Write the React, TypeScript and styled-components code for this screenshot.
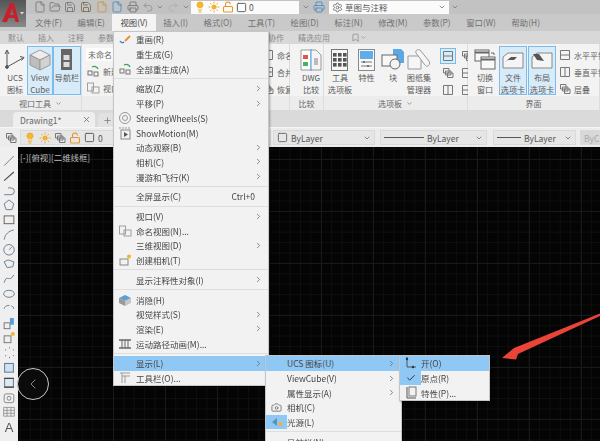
import type { ReactNode } from "react";
import styled, { createGlobalStyle } from "styled-components";
import {
  Bookmark, Camera, Check, ChevronDown, ChevronLeft, ChevronRight, File, FolderOpen, Lightbulb, LockOpen,
  Plus, Printer, Redo2, Save, Settings, Square, Sun, Undo2, X,
} from "lucide-react";

const GlobalStyle = createGlobalStyle`
  html, body { margin: 0; padding: 0; background: #000; overflow: hidden; }
  * { box-sizing: border-box; }
  svg { flex-shrink: 0; }
`;

const Screen = styled.div`
  position: relative;
  width: 600px;
  height: 441px;
  overflow: hidden;
  display: flex;
  flex-direction: column;
  font-family: "Noto Sans CJK SC", "Liberation Sans", sans-serif;
  font-size: 8.5px;
  color: #4a4a4a;
  filter: blur(0.35px);
`;

/* ---- title rows ---- */
const Header = styled.div`
  display: flex;
  height: 31px;
  background: #c9c9c9;
`;
const Logo = styled.div`
  width: 26px;
  height: 27px;
  background: linear-gradient(#555, #777 70%, #8a8a8a);
  flex: none;
`;
const HeaderRows = styled.div`
  flex: 1;
  display: flex;
  flex-direction: column;
`;
const QuickBar = styled.div`
  height: 14px;
  display: flex;
  align-items: center;
  background: #c2c2c2;
  padding-left: 7px;
`;
const QuickIcon = styled.span<{ $w?: number }>`
  width: ${(p) => p.$w ?? 16}px;
  display: flex;
  justify-content: center;
  color: #666;
`;
const WhiteField = styled.div<{ $w: number; $ml?: number }>`
  width: ${(p) => p.$w}px;
  margin-left: ${(p) => p.$ml ?? 0}px;
  height: 13px;
  background: #fbfbfb;
  display: flex;
  align-items: center;
  gap: 2px;
  padding: 0 3px;
  color: #555;
`;
const Grow = styled.span`
  flex: 1;
`;
const MenuBar = styled.div`
  height: 17px;
  display: flex;
  align-items: center;
  gap: 15.5px;
  padding-left: 9px;
  color: #707070;
  font-size: 8.4px;
`;
const MenuTitle = styled.span<{ $active?: boolean }>`
  height: 17px;
  line-height: 17px;
  white-space: nowrap;
  ${(p) => p.$active && `
    background: #f4f4f4;
    color: #444;
    padding: 0 8px;
    margin: 0 -8px;
  `}
`;

const TabsRow = styled.div`
  height: 13px;
  background: #d8d8d8;
  display: flex;
  align-items: center;
  padding-left: 8px;
  gap: 14px;
  color: #8a8a8a;
  font-size: 8px;
  white-space: nowrap;
`;
const RibbonTab = styled.span<{ $ml?: number }>`
  margin-left: ${(p) => p.$ml ?? 0}px;
  display: flex;
  align-items: center;
`;

/* ---- ribbon ---- */
const Ribbon = styled.div`
  height: 66px;
  display: flex;
  background: #e4e4e4;
`;
const Panel = styled.div<{ $w: number }>`
  width: ${(p) => p.$w}px;
  flex: none;
  display: flex;
  flex-direction: column;
  border-right: 1px solid #dcdcdc;
`;
const PanelBody = styled.div<{ $pl?: number; $gap?: number }>`
  height: 52px;
  padding: 2px 0 0 ${(p) => p.$pl ?? 0}px;
  background: #f3f3f3;
  display: flex;
  gap: ${(p) => p.$gap ?? 0}px;
`;
const PanelFoot = styled.div`
  flex: 1;
  background: #ececec;
  display: flex;
  align-items: center;
  justify-content: center;
  gap: 4px;
  color: #666;
  font-size: 8px;
`;
const BigTool = styled.div<{ $w: number; $active?: boolean }>`
  width: ${(p) => p.$w}px;
  height: 49px;
  flex: none;
  display: flex;
  flex-direction: column;
  align-items: center;
  padding-top: 3px;
  line-height: 12px;
  font-size: 8.1px;
  color: #5a5a5a;
  text-align: center;
  white-space: pre;
  ${(p) => p.$active && `
    background: #d8ebf9;
    outline: 1px solid #7cbcec;
    outline-offset: -1px;
  `}
  & > svg {
    height: 22px;
    margin-bottom: 1px;
    flex: none;
  }
`;
const SmallCol = styled.div<{ $w?: number; $ml?: number }>`
  width: ${(p) => (p.$w ? `${p.$w}px` : "auto")};
  margin-left: ${(p) => p.$ml ?? 0}px;
  flex: none;
  display: flex;
  flex-direction: column;
  gap: 3px;
  padding-top: 2px;
`;
const SmallRow = styled.div`
  height: 14px;
  display: flex;
  align-items: center;
  gap: 3px;
  white-space: nowrap;
  color: #5f5f5f;
  font-size: 8px;
`;
const ViewCombo = styled.div`
  height: 13px;
  width: 32px;
  background: #fcfcfc;
  display: flex;
  align-items: center;
  gap: 2px;
  padding-left: 2px;
  color: #666;
  font-size: 8px;
  overflow: hidden;
  white-space: nowrap;
`;
const IconGrid = styled.div`
  margin: 2px 0 0 7px;
  display: grid;
  grid-template-columns: 18px 18px;
  grid-auto-rows: 16px;
  gap: 1px;
  justify-items: center;
  align-items: center;
`;
const ActiveCell = styled.span`
  display: flex;
  padding: 1px;
  background: #d8ebf9;
  outline: 1px solid #7cbcec;
`;

/* ---- document tabs ---- */
const DocBar = styled.div`
  height: 18px;
  background: #dadada;
  display: flex;
  align-items: flex-end;
  padding-left: 13px;
  gap: 3px;
  border-bottom: 1px solid #f6f6f6;
`;
const DocTab = styled.div`
  width: 82px;
  height: 15px;
  background: #eeeeee;
  border-radius: 4px 4px 0 0;
  display: flex;
  align-items: center;
  justify-content: space-between;
  padding: 0 4px 0 7px;
  color: #666;
  font-size: 8.5px;
`;
const NewTab = styled.div`
  width: 18px;
  height: 14px;
  background: #e2e2e2;
  border-radius: 4px 4px 0 0;
  display: flex;
  align-items: center;
  justify-content: center;
  color: #777;
`;

/* ---- property toolbar ---- */
const PropBar = styled.div`
  height: 19px;
  background: #ececec;
  display: flex;
  align-items: center;
  padding-left: 5px;
`;
const Combo = styled.div<{ $w: number; $ml?: number; $off?: boolean }>`
  width: ${(p) => p.$w}px;
  margin-left: ${(p) => p.$ml ?? 0}px;
  height: 15px;
  flex: none;
  background: ${(p) => (p.$off ? "#d8d8d8" : "#e6e6e6")};
  border: 1px solid #dadada;
  display: flex;
  align-items: center;
  gap: 3px;
  padding: 0 3px;
  color: ${(p) => (p.$off ? "#aaa" : "#555")};
  font-size: 8.5px;
  white-space: nowrap;
  overflow: hidden;
`;
const LineSample = styled.span<{ $w: number }>`
  width: ${(p) => p.$w}px;
  height: 1px;
  background: #555;
  flex: none;
`;

/* ---- drawing area ---- */
const Workspace = styled.div`
  flex: 1;
  display: flex;
  min-height: 0;
`;
const ToolStrip = styled.div`
  width: 18px;
  flex: none;
  background: #efefef;
  display: flex;
  flex-direction: column;
  align-items: center;
  padding-top: 7px;
  gap: 1.2px;
`;
const StripIcon = styled.svg`
  width: 14px;
  height: 13.6px;
  flex: none;
  fill: none;
  stroke: #6b8196;
  stroke-width: 1;
`;
const StripLetter = styled.span`
  font-family: "Liberation Sans", sans-serif;
  font-size: 13px;
  line-height: 15px;
  color: #555;
`;
const Canvas = styled.div`
  flex: 1;
  position: relative;
  padding: 4px 0 0 2px;
  color: #bdbdbd;
  font-size: 8.4px;
  background-color: #040404;
  background-image:
    linear-gradient(90deg, #17191b 1px, transparent 1px),
    linear-gradient(#17191b 1px, transparent 1px),
    linear-gradient(90deg, #0d0e0f 1px, transparent 1px),
    linear-gradient(#0d0e0f 1px, transparent 1px);
  background-size: 52px 52px, 52px 52px, 10.4px 10.4px, 10.4px 10.4px;
  background-position: 43px 12px, 43px 12px, 43px 12px, 43px 12px;
`;
const BackButton = styled.div`
  position: absolute;
  left: -1px;
  top: 221px;
  width: 32px;
  height: 32px;
  border-radius: 50%;
  border: 1px solid #c8c8c8;
  background: #0b0b0b;
  display: flex;
  align-items: center;
  justify-content: center;
  color: #c8c8c8;
`;

/* ---- menus ---- */
const MenuPanel = styled.div<{ $left: number; $top: number; $w: number }>`
  position: absolute;
  left: ${(p) => p.$left}px;
  top: ${(p) => p.$top}px;
  width: ${(p) => p.$w}px;
  background: #f2f2f2;
  border: 1px solid #c6c6c6;
  box-shadow: 1px 1px 2px rgba(0, 0, 0, 0.3);
  color: #454545;
  font-size: 8.5px;
`;
const MenuRow = styled.div<{ $active?: boolean; $icon: number }>`
  height: 14.7px;
  display: flex;
  align-items: center;
  white-space: nowrap;
  background: ${(p) => (p.$active ? "#8fc7f5" : "transparent")};
  & > span:first-child {
    width: ${(p) => p.$icon}px;
  }
`;
const MenuIcon = styled.span<{ $on?: boolean }>`
  height: 100%;
  flex: none;
  display: flex;
  align-items: center;
  justify-content: center;
  background: ${(p) => (p.$on ? "#8fc7f5" : "transparent")};
`;
const MenuLabel = styled.span`
  flex: 1;
`;
const MenuKey = styled.span`
  margin-right: 13px;
  font-size: 8.5px;
`;
const MenuArrow = styled.span`
  width: 14px;
  flex: none;
  display: flex;
  color: #666;
`;
const MenuSep = styled.div`
  height: 5.05px;
  display: flex;
  align-items: center;
  &::after {
    content: "";
    flex: 1;
    height: 1px;
    background: #dedede;
  }
`;
const ArrowMark = styled.svg`
  position: absolute;
  left: 0;
  top: 0;
  width: 600px;
  height: 441px;
  pointer-events: none;
`;

/* ---- drawn icons ---- */
const Svg = ({ s = 14, w, children }: { s?: number; w?: number; children: ReactNode }) => (
  <svg width={w ?? s} height={s} viewBox={`0 0 ${w ?? s} ${s}`} fill="none" stroke="#777" strokeWidth="1">
    {children}
  </svg>
);

const LogoMark = () => (
  <svg width="26" height="27" viewBox="0 0 26 27">
    <path d="M2 22 L10 3 H14 L19 22 H15.5 L14.4 18 H8.6 L6.8 22 Z M9.8 15 H13.7 L12.1 8 Z" fill="#c8202a" fillRule="evenodd" />
    <path d="M20 12 h4 l-2 2.5 z" fill="#ddd" />
  </svg>
);
const UcsBig = () => (
  <svg width="24" height="22" viewBox="0 0 24 22" fill="none" stroke="#555">
    <path d="M4 2 V18 L20 9" />
    <path d="M2 5 L4 1 L6 5 M17 7.5 L21 8.5 L18.5 11.5" />
    <circle cx="4" cy="18" r="1.4" fill="#555" />
  </svg>
);
const CubeBig = () => (
  <svg width="22" height="22" viewBox="0 0 22 22" stroke="#9a9a9a">
    <path d="M11 1 L21 6 L11 11 L1 6 Z" fill="#ededed" />
    <path d="M1 6 L11 11 V21 L1 16 Z" fill="#bdbdbd" />
    <path d="M21 6 L11 11 V21 L21 16 Z" fill="#d2d2d2" />
  </svg>
);
const NavBig = () => (
  <svg width="14" height="22" viewBox="0 0 14 22">
    <rect x="1" y="0" width="11" height="21" fill="#666" />
    <rect x="3.5" y="6" width="6" height="5" fill="#ddd" />
    <rect x="3.5" y="13" width="6" height="5" fill="#ddd" />
  </svg>
);
const DwgBig = () => (
  <svg width="22" height="22" viewBox="0 0 22 22" fill="none">
    <path d="M1 1 H11 V21 H1 Z" stroke="#999" fill="#fff" />
    <path d="M11 1 H16 L21 6 V21 H11" stroke="#999" fill="#f5f5f5" />
    <path d="M11 0 V22" stroke="#46a6e8" />
    <rect x="3" y="6" width="5" height="4" fill="#e8504a" />
    <rect x="3" y="13" width="5" height="4" fill="#49b35a" />
    <rect x="14" y="9" width="4" height="7" fill="#bbb" />
  </svg>
);
const PaletteBig = () => (
  <svg width="18" height="22" viewBox="0 0 18 22">
    <rect x="0.5" y="0.5" width="16" height="21" fill="#f8f8f8" stroke="#777" />
    {[4, 9, 14].map((y) => [2, 7, 12].map((x) => <rect key={`${x}-${y}`} x={x} y={y} width="3.6" height="3.6" fill="#555" />))}
  </svg>
);
const PropsBig = () => (
  <svg width="17" height="22" viewBox="0 0 17 22" fill="none">
    <rect x="0.5" y="0.5" width="16" height="21" fill="#f8f8f8" stroke="#888" />
    <rect x="2" y="2" width="13" height="8" fill="#60aee8" />
    <path d="M3 13 H14 M3 17 H14" stroke="#777" />
    <path d="M6 12 V14 M10 16 V18" stroke="#333" />
  </svg>
);
const BlockBig = () => (
  <svg width="24" height="22" viewBox="0 0 24 22" fill="none">
    <path d="M12 0 H20 L23 3 V14 H12 Z" fill="#5aa8e6" />
    <rect x="1" y="6" width="15" height="11" fill="#f8f8f8" stroke="#666" />
    <circle cx="14" cy="15" r="5" fill="#f3f3f3" stroke="#666" />
  </svg>
);
const SheetBig = () => (
  <svg width="24" height="22" viewBox="0 0 24 22" fill="#f6f6f6" stroke="#999">
    <path d="M1 7 L14 7 L14 20 L1 20 Z" />
    <path d="M13 1 L22 12 C24 16 20 19 18 16 L9 4 C8 1 11 0 13 1 Z" />
  </svg>
);
const SwitchBig = () => (
  <svg width="22" height="22" viewBox="0 0 22 22" fill="#f8f8f8" stroke="#666">
    <rect x="1" y="1" width="14" height="11" />
    <path d="M1 3.5 H15" strokeWidth="2" />
    <rect x="7" y="8" width="14" height="12" />
    <path d="M7 10.5 H21" strokeWidth="2" />
    <path d="M17 4 H20 V6" />
  </svg>
);
const FileTabBig = ({ flip }: { flip?: boolean }) => (
  <svg width="22" height="22" viewBox="0 0 22 22" fill="none">
    <path d="M1 8 L6 4 H21 V19 H1 Z" fill="#f5f5f5" stroke="#888" />
    {flip ? <path d="M2 5 L8 5 L13 12 L6 11 Z" fill="#555" /> : <path d="M3 13 L9 8 H15 L12 11 H6 Z" fill="#555" />}
  </svg>
);
const Tile = ({ kind }: { kind: "h" | "v" | "c" }) => (
  <Svg s={12}>
    {kind === "h" && <path d="M1.5 1.5 H10.5 V10.5 H1.5 Z M1.5 6 H10.5" />}
    {kind === "v" && <path d="M1.5 1.5 H10.5 V10.5 H1.5 Z M6 1.5 V10.5" />}
    {kind === "c" && <path d="M1.5 1.5 H7 V6 H1.5 Z M3.5 4 H9 V8 H3.5 Z M5.5 6 H11 V10.5 H5.5 Z" />}
  </Svg>
);
const Pencil = () => (
  <Svg>
    <path d="M2 9 C3 11 5 11 6 10" stroke="#3a7fd5" strokeWidth="1.4" />
    <path d="M7 9 L12 4" stroke="#e8932f" strokeWidth="2" />
  </Svg>
);
const Regen = () => (
  <Svg>
    <rect x="2" y="7" width="4" height="4" />
    <path d="M6 3 A4 4 0 0 1 12 5" stroke="#3aa655" strokeWidth="1.3" />
    <rect x="8" y="8" width="4" height="4" />
  </Svg>
);
const Wheel = () => (
  <Svg>
    <circle cx="7" cy="7" r="5.5" stroke="#999" />
    <circle cx="7" cy="7" r="2.5" stroke="#999" />
  </Svg>
);
const Motion = () => (
  <Svg>
    <path d="M1 2 H12" stroke="#999" strokeDasharray="2 1" />
    <rect x="3" y="4" width="9" height="9" stroke="#888" />
    <path d="M6 6 L10 8.5 L6 11 Z" fill="#555" stroke="none" />
  </Svg>
);
const NamedView = () => (
  <Svg>
    <rect x="1.5" y="2" width="6" height="8" stroke="#a0a0a0" />
    <rect x="6" y="6" width="7" height="6" stroke="#a0a0a0" />
  </Svg>
);
const CamStar = () => (
  <Svg>
    <rect x="2" y="6" width="8" height="6" stroke="#888" />
    <circle cx="11" cy="3.5" r="2" fill="#f2b32e" stroke="none" />
  </Svg>
);
const Hide = () => (
  <Svg>
    <path d="M7 2 L13 5 L7 8 L1 5 Z" fill="#5d9fd2" stroke="none" />
    <path d="M1 5 L7 8 V13 L1 10 Z" fill="#999" stroke="none" />
    <path d="M13 5 L7 8 V13 L13 10 Z" fill="#c6c6c6" stroke="none" />
  </Svg>
);
const MotionPath = () => (
  <Svg>
    <path d="M1 3 H13 M1 11 H13" stroke="#666" strokeWidth="1.3" />
    <path d="M4 3 V11 M7 3 V11 M10 3 V11" stroke="#666" />
  </Svg>
);
const ToolbarIcon = () => (
  <Svg>
    <path d="M2 2 H12 M4 2 V12 M4 5 H12 M7 5 V12" stroke="#999" />
  </Svg>
);
const LightIcon = () => (
  <Svg>
    <path d="M2 7 L7 3 V11 Z" fill="#5f91b8" stroke="none" />
    <circle cx="10.5" cy="9" r="2" fill="#f2b32e" stroke="none" />
  </Svg>
);
const UcsSmall = () => (
  <Svg>
    <path d="M3 1 V11 H12" stroke="#555" />
    <circle cx="3" cy="3" r="1.2" fill="#333" stroke="none" />
    <circle cx="9" cy="11" r="1.2" fill="#333" stroke="none" />
  </Svg>
);
const UcsProps = () => (
  <Svg>
    <rect x="5" y="1" width="7" height="9" stroke="#777" />
    <path d="M3 1 V12 H12" stroke="#555" />
  </Svg>
);

const stripPaths = [
  <path d="M2 12 L12 2" />,
  <path d="M2 12 L12 3" stroke="#555" strokeWidth="1.3" />,
  <path d="M2 11 H9 A3 3 0 0 0 9 4 H6" />,
  <path d="M7 2 L12 6 L10 12 H4 L2 6 Z" />,
  <rect x="2" y="3" width="10" height="8" stroke="#666" />,
  <path d="M2 12 C3 6 7 3 12 2" />,
  <><circle cx="7" cy="7" r="5.4" /><path d="M7 7 L10 4" /></>,
  <path d="M2 5 L6 3 L12 5 L11 10 L5 11 Z" strokeLinejoin="round" />,
  <path d="M2 11 C5 1 7 12 12 3" />,
  <ellipse cx="7" cy="7" rx="5.5" ry="3.6" />,
  <path d="M2 7 A5 3.5 0 1 1 12 7" strokeDasharray="7 2" />,
  <><rect x="2" y="6" width="6" height="6" stroke="#777" /><rect x="8" y="1" width="4" height="7" fill="#5a9fdc" stroke="none" /></>,
  <><rect x="2" y="5" width="7" height="7" stroke="#777" /><circle cx="11" cy="3" r="2" fill="#f2b32e" stroke="none" /></>,
  <path d="M3 4 H4 M7 2 H8 M11 4 H12 M3 10 H4 M7 12 H8 M11 10 H12" stroke="#666" />,
  <rect x="2.5" y="2.5" width="9" height="9" fill="#cfe2f2" stroke="#5d7690" />,
  <><rect x="2.5" y="2.5" width="9" height="9" fill="#dfe9f2" stroke="#5d7690" /><path d="M2 2.5 H12 M2 11.5 H12" stroke="#444" strokeWidth="1.4" /></>,
  <><rect x="2" y="3" width="10" height="9" rx="2" stroke="#888" /><circle cx="7" cy="7.5" r="2" stroke="#888" /></>,
  <path d="M1.5 2.5 H12.5 V11.5 H1.5 Z M1.5 5.5 H12.5 M1.5 8.5 H12.5 M5 2.5 V11.5 M9 2.5 V11.5" stroke="#888" strokeWidth="0.8" />,
];

const mainMenu = [
  { icon: <Pencil />, label: "重画(R)" },
  { label: "重生成(G)" },
  { icon: <Regen />, label: "全部重生成(A)" },
  "sep",
  { label: "缩放(Z)", more: true },
  { label: "平移(P)", more: true },
  { icon: <Wheel />, label: "SteeringWheels(S)" },
  { icon: <Motion />, label: "ShowMotion(M)" },
  { label: "动态观察(B)", more: true },
  { label: "相机(C)", more: true },
  { label: "漫游和飞行(K)", more: true },
  "sep",
  { label: "全屏显示(C)", key: "Ctrl+0" },
  "sep",
  { label: "视口(V)", more: true },
  { icon: <NamedView />, label: "命名视图(N)..." },
  { label: "三维视图(D)", more: true },
  { icon: <CamStar />, label: "创建相机(T)" },
  "sep",
  { label: "显示注释性对象(I)", more: true },
  "sep",
  { icon: <Hide />, label: "消隐(H)" },
  { label: "视觉样式(S)", more: true },
  { label: "渲染(E)", more: true },
  { icon: <MotionPath />, label: "运动路径动画(M)..." },
  "sep",
  { label: "显示(L)", more: true, active: true },
  { icon: <ToolbarIcon />, label: "工具栏(O)..." },
];

const displayMenu = [
  { label: "UCS 图标(U)", more: true, active: true },
  { label: "ViewCube(V)", more: true },
  { label: "属性显示(A)", more: true },
  { icon: <Camera size={11} color="#777" />, label: "相机(C)" },
  { icon: <LightIcon />, label: "光源(L)", on: true },
  "sep",
  { label: "导航栏(N)" },
];

type Item = { icon?: ReactNode; label: string; more?: boolean; active?: boolean; key?: string; on?: boolean };

const MenuItems = ({ items, icon }: { items: (Item | string)[]; icon: number }) => (
  <>
    {items.map((it, i) => {
      if (typeof it === "string") return <MenuSep key={i} />;
      return (
        <MenuRow key={i} $active={it.active} $icon={icon}>
          <MenuIcon $on={it.on}>{it.icon}</MenuIcon>
          <MenuLabel>{it.label}</MenuLabel>
          {it.key && <MenuKey>{it.key}</MenuKey>}
          {it.more && (
            <MenuArrow>
              <ChevronRight size={9} />
            </MenuArrow>
          )}
        </MenuRow>
      );
    })}
  </>
);

const q = { size: 12, strokeWidth: 1.4 };
const bulb = <Lightbulb size={12} color="#f0a81e" fill="#f6b92b" />;
const sun = <Sun size={12} color="#f0a81e" fill="#f6b92b" />;
const lock = <LockOpen size={12} color="#e5952a" strokeWidth={2.2} />;

export default function App() {
  return (
    <Screen>
      <GlobalStyle />
      <Header>
        <Logo>
          <LogoMark />
        </Logo>
        <HeaderRows>
          <QuickBar>
            <QuickIcon $w={14}><File {...q} /></QuickIcon>
            <QuickIcon $w={15}><FolderOpen {...q} /></QuickIcon>
            <QuickIcon><Save {...q} /></QuickIcon>
            <QuickIcon><Save {...q} color="#6a5a3a" /></QuickIcon>
            <QuickIcon $w={15}><File {...q} color="#c98a2a" /></QuickIcon>
            <QuickIcon><File {...q} color="#2a7fc8" /></QuickIcon>
            <QuickIcon><Printer {...q} /></QuickIcon>
            <QuickIcon $w={14}><Undo2 {...q} color="#888" /></QuickIcon>
            <QuickIcon $w={10}><ChevronDown size={8} /></QuickIcon>
            <QuickIcon $w={16}><Redo2 {...q} color="#aaa" /></QuickIcon>
            <QuickIcon $w={10}><ChevronDown size={8} /></QuickIcon>
            <WhiteField $w={108}>
              {bulb}
              {sun}
              {lock}
              <Square size={11} color="#555" />
              <span>0</span>
            </WhiteField>
            <QuickIcon $w={14}><ChevronDown size={8} /></QuickIcon>
            <QuickIcon $w={12}><Printer {...q} color="#2a7fc8" /></QuickIcon>
            <WhiteField $w={120} $ml={4}>
              <Settings size={11} color="#777" />
              <span>草图与注释</span>
              <Grow />
              <ChevronDown size={8} />
            </WhiteField>
            <QuickIcon $w={12}><ChevronDown size={8} /></QuickIcon>
          </QuickBar>
          <MenuBar>
            <MenuTitle>文件(F)</MenuTitle>
            <MenuTitle>编辑(E)</MenuTitle>
            <MenuTitle $active>视图(V)</MenuTitle>
            <MenuTitle>插入(I)</MenuTitle>
            <MenuTitle>格式(O)</MenuTitle>
            <MenuTitle>工具(T)</MenuTitle>
            <MenuTitle>绘图(D)</MenuTitle>
            <MenuTitle>标注(N)</MenuTitle>
            <MenuTitle>修改(M)</MenuTitle>
            <MenuTitle>参数(P)</MenuTitle>
            <MenuTitle>窗口(W)</MenuTitle>
            <MenuTitle>帮助(H)</MenuTitle>
          </MenuBar>
        </HeaderRows>
      </Header>

      <TabsRow>
        <RibbonTab>默认</RibbonTab>
        <RibbonTab>插入</RibbonTab>
        <RibbonTab>注释</RibbonTab>
        <RibbonTab>参数化</RibbonTab>
        <RibbonTab $ml={132}>协作</RibbonTab>
        <RibbonTab>精选应用</RibbonTab>
        <RibbonTab $ml={7}><Bookmark size={9} /><ChevronDown size={7} /></RibbonTab>
      </TabsRow>

      <Ribbon>
        <Panel $w={82}>
          <PanelBody $pl={3}>
            <BigTool $w={24}><UcsBig />UCS{"\n"}图标</BigTool>
            <BigTool $w={26} $active><CubeBig />View{"\n"}Cube</BigTool>
            <BigTool $w={28} $active><NavBig />导航栏</BigTool>
          </PanelBody>
          <PanelFoot>视口工具 <ChevronDown size={7} /></PanelFoot>
        </Panel>
        <Panel $w={208}>
          <PanelBody $pl={4}>
            <SmallCol $w={176}>
              <ViewCombo>未命名</ViewCombo>
              <SmallRow><Regen />新建</SmallRow>
              <SmallRow><NamedView />视口</SmallRow>
            </SmallCol>
            <SmallCol>
              <SmallRow><Tile kind="v" />命名</SmallRow>
              <SmallRow><Tile kind="h" />合并</SmallRow>
              <SmallRow><Tile kind="c" />恢复</SmallRow>
            </SmallCol>
          </PanelBody>
          <PanelFoot />
        </Panel>
        <Panel $w={34}>
          <PanelBody $pl={9}>
            <BigTool $w={24}><DwgBig />DWG{"\n"}比较</BigTool>
          </PanelBody>
          <PanelFoot>比较</PanelFoot>
        </Panel>
        <Panel $w={144}>
          <PanelBody $pl={3}>
            <BigTool $w={26}><PaletteBig />工具{"\n"}选项板</BigTool>
            <BigTool $w={27}><PropsBig />特性</BigTool>
            <BigTool $w={26}><BlockBig />块</BigTool>
            <BigTool $w={26}><SheetBig />图纸集{"\n"}管理器</BigTool>
            <IconGrid>
              <ActiveCell><Tile kind="h" /></ActiveCell>
              <Tile kind="c" />
              <Tile kind="c" />
              <Tile kind="h" />
              <Tile kind="v" />
              <Tile kind="h" />
            </IconGrid>
          </PanelBody>
          <PanelFoot>选项板 <ChevronDown size={7} /></PanelFoot>
        </Panel>
        <Panel $w={132}>
          <PanelBody $pl={4} $gap={1}>
            <BigTool $w={26}><SwitchBig />切换{"\n"}窗口</BigTool>
            <BigTool $w={28} $active><FileTabBig />文件{"\n"}选项卡</BigTool>
            <BigTool $w={28} $active><FileTabBig flip />布局{"\n"}选项卡</BigTool>
            <SmallCol $ml={2}>
              <SmallRow><Tile kind="h" />水平平铺</SmallRow>
              <SmallRow><Tile kind="v" />垂直平铺</SmallRow>
              <SmallRow><Tile kind="c" />层叠</SmallRow>
            </SmallCol>
          </PanelBody>
          <PanelFoot>界面</PanelFoot>
        </Panel>
      </Ribbon>

      <DocBar>
        <DocTab>
          Drawing1*
          <X size={9} />
        </DocTab>
        <NewTab><Plus size={9} /></NewTab>
      </DocBar>

      <PropBar>
        <Tile kind="c" />
        <Combo $w={251} $ml={3}>
          {bulb}
          {sun}
          <Tile kind="c" />
          {lock}
          <Square size={11} color="#555" />
          <span>0</span>
        </Combo>
        <Combo $w={102} $ml={2}>
          <Square size={11} color="#666" />
          ByLayer
          <Grow />
          <ChevronDown size={8} />
        </Combo>
        <Combo $w={107} $ml={5}>
          <LineSample $w={40} />
          ByLayer
          <Grow />
          <ChevronDown size={8} />
        </Combo>
        <Combo $w={83} $ml={6}>
          <LineSample $w={24} />
          ByLayer
          <Grow />
          <ChevronDown size={8} />
        </Combo>
        <Combo $w={20} $ml={4} $off>ByColor</Combo>
      </PropBar>

      <Workspace>
        <ToolStrip>
          {stripPaths.map((p, i) => (
            <StripIcon key={i} viewBox="0 0 14 14">{p}</StripIcon>
          ))}
          <StripLetter>A</StripLetter>
        </ToolStrip>
        <Canvas>
          [-][俯视][二维线框]
          <BackButton>
            <ChevronLeft size={16} strokeWidth={1} />
          </BackButton>
        </Canvas>
      </Workspace>

      <ArrowMark viewBox="0 0 600 441">
        <path d="M600 313.5 L514 348 L502 358 L516 359.5 L518 354 L600 316 Z" fill="#ea4338" />
      </ArrowMark>

      <MenuPanel $left={113} $top={31} $w={156}>
        <MenuItems items={mainMenu} icon={22} />
      </MenuPanel>
      <MenuPanel $left={265} $top={355} $w={137}>
        <MenuItems items={displayMenu} icon={21} />
      </MenuPanel>
      <MenuPanel $left={399} $top={355} $w={91}>
        <MenuRow $active $icon={21}>
          <MenuIcon><UcsSmall /></MenuIcon>
          <MenuLabel>开(O)</MenuLabel>
        </MenuRow>
        <MenuRow $icon={21}>
          <MenuIcon $on><Check size={10} color="#333" strokeWidth={2.4} /></MenuIcon>
          <MenuLabel>原点(R)</MenuLabel>
        </MenuRow>
        <MenuRow $icon={21}>
          <MenuIcon><UcsProps /></MenuIcon>
          <MenuLabel>特性(P)...</MenuLabel>
        </MenuRow>
      </MenuPanel>
    </Screen>
  );
}
